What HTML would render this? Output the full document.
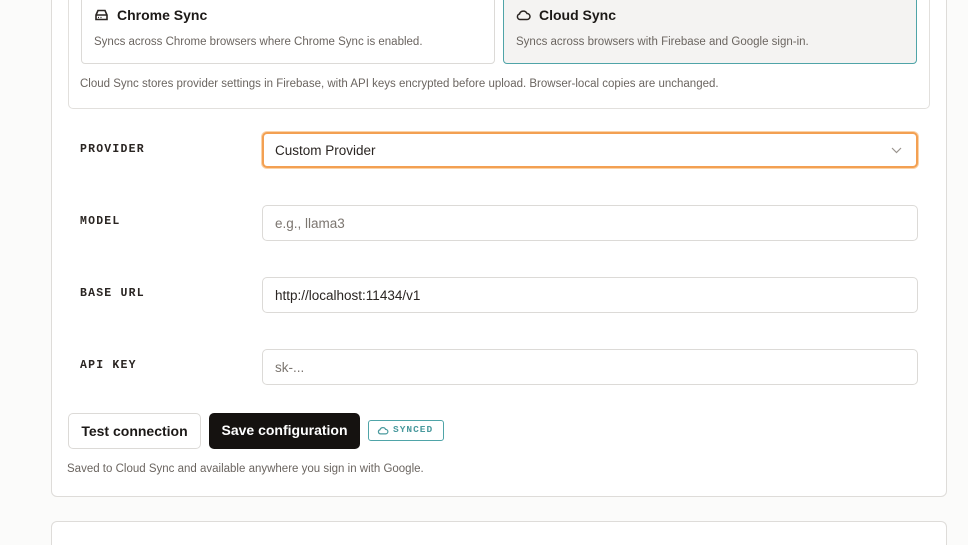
<!DOCTYPE html>
<html style="width:968px;height:545px;overflow:hidden"><head><style>
*{box-sizing:border-box;margin:0;padding:0}
body{width:968px;height:545px;overflow:hidden;background:#fbfbfa;font-family:"Liberation Sans",sans-serif;position:relative;color:#1c1917}
.abs{position:absolute}
.card{position:absolute;left:51px;top:-20px;width:896px;height:517px;background:#fff;border:1px solid #dedcd9;border-radius:6px}
.inner{position:absolute;left:68px;top:-20px;width:862px;height:129px;border:1px solid #e2e0dd;border-radius:5px;background:#fff}
.opt{position:absolute;top:-20px;height:84px;border:1px solid #dcdad7;border-radius:4px;background:#fff}
.opt .t{position:absolute;left:35px;top:26px;font-weight:bold;font-size:14px}
.opt .d{position:absolute;left:12px;font-size:11.5px;color:#6b6560}
.opt svg{position:absolute;left:12px;top:28px}
.lab{position:absolute;left:80px;font-family:"Liberation Mono",monospace;font-weight:bold;font-size:11.5px;letter-spacing:1.2px;color:#2a2522}
.inp{position:absolute;left:262px;width:656px;height:36px;border:1px solid #dcdad7;border-radius:5px;background:#fff;font-size:13.5px;padding:10px 12px;color:#2a2522}
.ph{color:#7c7670}
.btn{position:absolute;top:413px;height:36px;border-radius:5px;font-weight:bold;font-size:14px;text-align:center;line-height:34px}
</style></head><body>
<div class="card"></div>
<div class="inner"></div>
<div class="opt" style="left:81px;width:414px">
<svg width="15" height="12" viewBox="0 0 15 12" fill="none" stroke="#2a2522" stroke-width="1.6"><path d="M2 6 L4 1.5 H11 L13 6 V10.5 H2 Z M2 6 H13"/><path d="M4 8.5h1M6.5 8.5h1" stroke-width="1.2"/></svg>
<div class="t">Chrome Sync</div><div class="d" style="top:55px">Syncs across Chrome browsers where Chrome Sync is enabled.</div></div>
<div class="opt" style="left:503px;width:414px;background:#f4f3f2;border-color:#4fa4a8">
<svg width="15" height="12" viewBox="0 0 15 12" fill="none" stroke="#2a2522" stroke-width="1.5"><path d="M4 10.5 H11 A3 3 0 0 0 11 4.5 A4 4 0 0 0 3.5 5 A2.8 2.8 0 0 0 4 10.5 Z"/></svg>
<div class="t">Cloud Sync</div><div class="d" style="top:55px">Syncs across browsers with Firebase and Google sign-in.</div></div>
<div class="abs" style="left:80px;top:78px;font-size:11.5px;color:#6b6560">Cloud Sync stores provider settings in Firebase, with API keys encrypted before upload. Browser-local copies are unchanged.</div>

<div class="lab" style="top:143px">PROVIDER</div>
<div class="inp" style="top:132px;border:2px solid #f3a052;box-shadow:0 0 0 1px #fbd3a8;padding:9px 11px">Custom Provider
<svg class="abs" style="right:14px;top:13px" width="11" height="7" viewBox="0 0 11 7" fill="none" stroke="#9a948e" stroke-width="1.2"><path d="M1 1l4.5 4.5L10 1"/></svg></div>
<div class="lab" style="top:215px">MODEL</div>
<div class="inp ph" style="top:205px">e.g., llama3</div>
<div class="lab" style="top:287px">BASE URL</div>
<div class="inp" style="top:277px">http://localhost:11434/v1</div>
<div class="lab" style="top:359px">API KEY</div>
<div class="inp ph" style="top:349px">sk-...</div>

<div class="btn" style="left:68px;width:133px;border:1px solid #dcdad7;background:#fff">Test connection</div>
<div class="btn" style="left:209px;width:151px;background:#151210;color:#fff">Save configuration</div>
<div class="abs" style="left:368px;top:420px;width:76px;height:21px;border:1.5px solid #4fa4a8;border-radius:3px;font-family:'Liberation Mono',monospace;font-weight:bold;font-size:9.5px;letter-spacing:1px;color:#4a9a9e;line-height:18px;padding-left:24px">SYNCED
<svg class="abs" style="left:8px;top:5px" width="12" height="9" viewBox="0 0 15 12" fill="none" stroke="#4a9a9e" stroke-width="1.6"><path d="M4 10.5 H11 A3 3 0 0 0 11 4.5 A4 4 0 0 0 3.5 5 A2.8 2.8 0 0 0 4 10.5 Z"/></svg></div>
<div class="abs" style="left:67px;top:463px;font-size:11.5px;color:#6b6560">Saved to Cloud Sync and available anywhere you sign in with Google.</div>
<div class="abs" style="left:51px;top:521px;width:896px;height:24px;background:#fff;border:1px solid #dedcd9;border-bottom:none;border-radius:6px 6px 0 0"></div>
</body></html>
